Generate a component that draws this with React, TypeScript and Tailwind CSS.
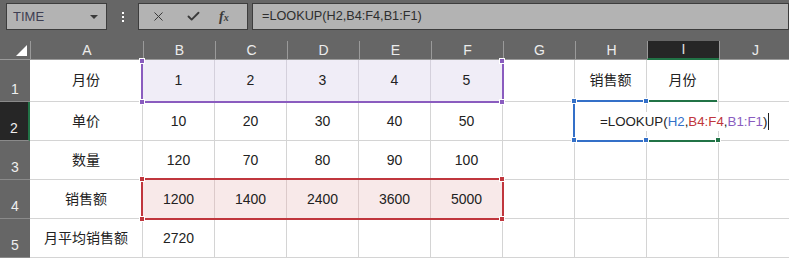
import React from 'react'
import { X, Check } from 'lucide-react'

const COLS = ['A', 'B', 'C', 'D', 'E', 'F', 'G', 'H', 'I', 'J']

type Row = { n: number; h: string; cells: (React.ReactNode | null)[] }

const rows: Row[] = [
  { n: 1, h: 'h-[42px]', cells: ['月份', '1', '2', '3', '4', '5', null, '销售额', '月份', null] },
  { n: 2, h: 'h-[39px]', cells: ['单价', '10', '20', '30', '40', '50', null, null, null, null] },
  { n: 3, h: 'h-[39px]', cells: ['数量', '120', '70', '80', '90', '100', null, null, null, null] },
  { n: 4, h: 'h-[39px]', cells: ['销售额', '1200', '1400', '2400', '3600', '5000', null, null, null, null] },
  { n: 5, h: 'h-[39px]', cells: ['月平均销售额', '2720', null, null, null, null, null, null, null, null] },
]

function cellBg(r: number, c: number) {
  if (r === 1 && c >= 1 && c <= 5) return 'bg-[#f0edf7]'
  if (r === 4 && c >= 1 && c <= 5) return 'bg-[#f8e9e9]'
  return 'bg-white'
}

function Handle({ className }: { className: string }) {
  return <div className={`absolute h-[6px] w-[6px] border border-white ${className}`} />
}

export default function App() {
  return (
    <div className="h-[258px] w-[789px] overflow-hidden bg-[#666666] font-['Liberation_Sans','Noto_Sans_CJK_SC',sans-serif] text-[14px] text-[#222]">
      {/* toolbar */}
      <div className="flex h-[41px] items-start gap-0 pt-[3px] pl-[6px]">
        <div className="flex h-[27px] w-[101px] items-center justify-between border border-[#3d3d3d] bg-[#b3b3b3] pl-[6px] pr-[8px] text-[13px] text-[#3e3e52]">
          <span>TIME</span>
          <span className="h-0 w-0 border-x-[4px] border-t-[4px] border-x-transparent border-t-[#3a3a3a]" />
        </div>
        <div className="flex h-[27px] w-[31px] flex-col items-center justify-center gap-[2px]">
          <span className="h-[2px] w-[2px] bg-white" />
          <span className="h-[2px] w-[2px] bg-white" />
          <span className="h-[2px] w-[2px] bg-white" />
        </div>
        <div className="flex h-[27px] w-[110px] items-center border border-[#3d3d3d] bg-[#b3b3b3] text-[#3a3a3a]">
          <X className="ml-[12px] h-[15px] w-[15px]" strokeWidth={1.6} />
          <Check className="ml-[20px] h-[15px] w-[15px]" strokeWidth={3} />
          <span className="ml-[18px] font-['Liberation_Serif',serif] text-[14px] italic font-bold leading-none">
            f<span className="text-[10px]">x</span>
          </span>
        </div>
        <div className="ml-[4px] flex h-[27px] flex-1 items-center border border-[#3d3d3d] bg-[#b3b3b3] pl-[9px] text-[12.7px] text-[#2e2e2e]">
          =LOOKUP(H2,B4:F4,B1:F1)
        </div>
      </div>

      {/* sheet */}
      <div className="relative">
        <div className="grid grid-cols-[30px_113px_repeat(8,72px)_72px]">
          {/* column header */}
          <div className="relative h-[19px] border-b border-[#9a9a9a] bg-[#666666]">
            <div className="absolute bottom-[3px] right-[3px] h-0 w-0 border-b-[11px] border-l-[11px] border-l-transparent border-b-white" />
          </div>
          {COLS.map((c) => (
            <div
              key={c}
              className={`flex h-[19px] items-center justify-center border-l border-[#9a9a9a] text-[14px] ${
                c === 'I' ? 'border-b-[2px] border-b-[#217346] bg-[#262626] text-[#e0e0e0]' : 'border-b bg-[#666666] text-[#ececec]'
              }`}
            >
              {c}
            </div>
          ))}

          {rows.map((row) => (
            <React.Fragment key={row.n}>
              <div
                className={`flex ${row.h} items-end justify-center border-b border-[#8a8a8a] pb-[1px] text-[14px] text-[#efefef] ${
                  row.n === 2 ? 'border-r-[2px] border-r-[#217346] bg-[#262626]' : 'bg-[#666666]'
                }`}
              >
                {row.n}
              </div>
              {row.cells.map((v, ci) => (
                <div
                  key={ci}
                  className={`flex ${row.h} items-center justify-center whitespace-nowrap border-b border-r ${
                    row.n === 4 && ci >= 1 && ci <= 5 ? 'border-[#dccaca]' : row.n === 1 && ci >= 1 && ci <= 5 ? 'border-[#d4d0dc]' : 'border-[#d4d4d4]'
                  } ${cellBg(row.n, ci)}`}
                >
                  {v}
                </div>
              ))}
            </React.Fragment>
          ))}
        </div>

        {/* B1:F1 purple range */}
        <div className="pointer-events-none absolute left-[141px] top-[19px] h-[43px] w-[363px] border-x-2 border-b-2 border-[#8a5cbf]" />
        <Handle className="left-[139px] top-[17px] bg-[#8a5cbf]" />
        <Handle className="left-[499px] top-[17px] bg-[#8a5cbf]" />
        <Handle className="left-[139px] top-[58px] bg-[#8a5cbf]" />
        <Handle className="left-[499px] top-[58px] bg-[#8a5cbf]" />

        {/* B4:F4 red range */}
        <div className="pointer-events-none absolute left-[141px] top-[137px] h-[42px] w-[363px] border-2 border-[#c0363d]" />
        <Handle className="left-[139px] top-[135px] bg-[#c0363d]" />
        <Handle className="left-[499px] top-[135px] bg-[#c0363d]" />
        <Handle className="left-[139px] top-[175px] bg-[#c0363d]" />
        <Handle className="left-[499px] top-[175px] bg-[#c0363d]" />

        {/* H2 blue reference */}
        <div className="pointer-events-none absolute left-[573px] top-[59px] h-[42px] w-[73px] border-y-2 border-l-2 border-[#3470c8]" />
        <Handle className="left-[571px] top-[57px] bg-[#3470c8]" />
        <Handle className="left-[643px] top-[57px] bg-[#3470c8]" />
        <Handle className="left-[571px] top-[96px] bg-[#3470c8]" />
        <Handle className="left-[643px] top-[96px] bg-[#3470c8]" />

        {/* I2 active cell (edit mode) */}
        <div className="pointer-events-none absolute left-[649px] top-[59px] h-[42px] w-[68px] border-y-2 border-[#217346]" />
        <Handle className="left-[715px] top-[96px] bg-[#217346]" />

        {/* formula being edited in I2 */}
        <div className="pointer-events-none absolute left-[600px] top-[61px] flex h-[39px] items-center whitespace-nowrap text-[13.3px]">
          <span className="bg-white text-[#222]">=LOOKUP(</span>
          <span className="bg-white text-[#3470c8]">H2</span>
          <span className="bg-white text-[#222]">,</span>
          <span className="bg-white text-[#c0363d]">B4:F4</span>
          <span className="bg-white text-[#222]">,</span>
          <span className="bg-white text-[#8a5cbf]">B1:F1</span>
          <span className="bg-white text-[#222]">)</span>
          <span className="ml-[1px] h-[17px] w-px bg-[#222]" />
        </div>
      </div>
    </div>
  )
}
